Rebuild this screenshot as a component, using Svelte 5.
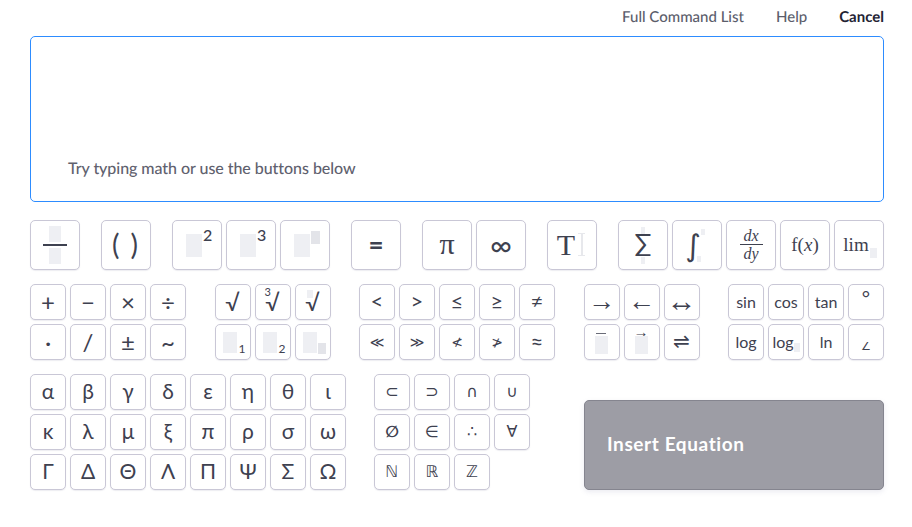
<script>
	const ops = ['+', '−', '×', '÷', '·', '/', '±', '~'];
	const rel = ['<', '>', '≤', '≥', '≠', '≪', '≫', '≮', '≯', '≈'];
	const relFallback = ['≪', '≫', '≮', '≯'];
	const greek = ['α', 'β', 'γ', 'δ', 'ε', 'η', 'θ', 'ι', 'κ', 'λ', 'μ', 'ξ', 'π', 'ρ', 'σ', 'ω', 'Γ', 'Δ', 'Θ', 'Λ', 'Π', 'Ψ', 'Σ', 'Ω'];
	const sets = ['⊂', '⊃', '∩', '∪', '∅', '∈', '∴', '∀', 'ℕ', 'ℝ', 'ℤ'];
</script>

<div class="page">
	<header class="top">
		<a href="#commands">Full Command List</a>
		<a href="#help">Help</a>
		<a href="#cancel" class="cancel">Cancel</a>
	</header>

	<div class="editor">
		<span class="hint">Try typing math or use the buttons below</span>
	</div>

	<div class="row-big">
		<div class="group">
			<button class="big frac"><i class="ph fr-a"></i><b class="bar"></b><i class="ph fr-b"></i></button>
		</div>
		<div class="group"><button class="big paren">(&nbsp;)</button></div>
		<div class="group">
			<button class="big"><i class="ph base"></i><span class="sup">2</span></button>
			<button class="big"><i class="ph base"></i><span class="sup">3</span></button>
			<button class="big"><i class="ph base"></i><i class="ph-dark sup-box"></i></button>
		</div>
		<div class="group"><button class="big equal">=</button></div>
		<div class="group">
			<button class="big serif-sym">π</button>
			<button class="big inf">∞</button>
		</div>
		<div class="group">
			<button class="big text-btn">T<i class="caret"></i></button>
		</div>
		<div class="group">
			<button class="big sum"><i class="ph lim-top"></i>∑<i class="ph lim-bot"></i></button>
			<button class="big int">∫<i class="ph int-top"></i><i class="ph int-bot"></i></button>
			<button class="big deriv"><em>dx</em><b class="dbar"></b><em>dy</em></button>
			<button class="big func">f(<em>x</em>)</button>
			<button class="big func lim">lim<i class="ph lim-sub"></i></button>
		</div>
	</div>

	<div class="row-small">
		<div class="grid c4">
			{#each ops as op}
				<button class="small op">{op}</button>
			{/each}
		</div>
		<div class="grid c3">
			<button class="small root">√</button>
			<button class="small root"><span class="idx">3</span>√</button>
			<button class="small root"><i class="ph idx-box"></i>√</button>
			<button class="small"><i class="ph sub-base"></i><span class="sub">1</span></button>
			<button class="small"><i class="ph sub-base"></i><span class="sub">2</span></button>
			<button class="small"><i class="ph sub-base"></i><i class="ph-dark sub-box"></i></button>
		</div>
		<div class="grid c5">
			{#each rel as r}
				<button class="small rel" class:rel-alt={relFallback.includes(r)}>{r}</button>
			{/each}
		</div>
		<div class="grid c3">
			<button class="small arrow">→</button>
			<button class="small arrow">←</button>
			<button class="small arrow wide">↔</button>
			<button class="small over"><b class="line"></b><i class="ph over-box"></i></button>
			<button class="small over"><span class="vec">→</span><i class="ph over-box"></i></button>
			<button class="small arrow harp">⇌</button>
		</div>
		<div class="grid c4">
			<button class="small word">sin</button>
			<button class="small word">cos</button>
			<button class="small word">tan</button>
			<button class="small deg">°</button>
			<button class="small word">log</button>
			<button class="small word log-base">log<i class="ph log-sub"></i></button>
			<button class="small word">ln</button>
			<button class="small angle">∠</button>
		</div>
	</div>

	<div class="row-bottom">
		<div class="grid c8">
			{#each greek as g}
				<button class="small greek">{g}</button>
			{/each}
		</div>
		<div class="grid c4 sets">
			{#each sets as s}
				<button class="small set" class:heavy={s === '∅'}>{s}</button>
			{/each}
		</div>
		<button class="insert">Insert Equation</button>
	</div>
</div>

<style>
	:global(body) {
		background: #fff;
		font-family: Lato, "Noto Sans", sans-serif;
		color: #494c5a;
		text-rendering: geometricPrecision;
	}

	.page {
		width: 912px;
		height: 527px;
		box-sizing: border-box;
		padding: 0 28px 0 30px;
		overflow: hidden;
	}

	.top {
		display: flex;
		justify-content: flex-end;
		gap: 32px;
		height: 36px;
		padding-top: 7px;
		box-sizing: border-box;
		font-size: 15px;
		line-height: 20px;
		font-weight: 500;
	}

	.top a {
		color: #5b5d6b;
		text-decoration: none;
	}

	.top .cancel {
		color: #232333;
		font-weight: 700;
	}

	.editor {
		height: 166px;
		box-sizing: border-box;
		border: 1px solid #2d8cff;
		border-radius: 5px;
		padding: 120px 37px 0;
	}

	.hint {
		font-size: 16px;
		line-height: 24px;
		font-weight: 500;
		letter-spacing: -0.05px;
		color: #5f616e;
	}

	button {
		position: relative;
		display: flex;
		align-items: center;
		justify-content: center;
		flex: none;
		padding: 0;
		background: #fff;
		border: 1px solid #c9c7d6;
		border-radius: 5px;
		box-shadow: 0 1px 1px rgba(110, 110, 140, 0.12);
		font-family: inherit;
		color: #3e4150;
		white-space: nowrap;
	}

	.big {
		width: 50px;
		height: 50px;
		font-size: 22px;
	}

	.small {
		width: 36px;
		height: 36px;
		font-size: 18px;
	}

	.row-big {
		display: flex;
		justify-content: space-between;
		margin-top: 18px;
	}

	.group {
		display: flex;
		gap: 4px;
	}

	.row-small {
		display: flex;
		justify-content: space-between;
		margin-top: 14px;
	}

	.row-bottom {
		display: flex;
		align-items: flex-end;
		margin-top: 14px;
	}

	.grid {
		display: grid;
		gap: 4px;
		align-content: start;
	}

	.c3 { grid-template-columns: repeat(3, 36px); }
	.c4 { grid-template-columns: repeat(4, 36px); }
	.c5 { grid-template-columns: repeat(5, 36px); }
	.c8 { grid-template-columns: repeat(8, 36px); }

	.sets {
		margin-left: 28px;
		align-self: flex-start;
	}

	/* placeholder blocks */
	.ph,
	.ph-dark {
		position: absolute;
		display: block;
		background: #eeeff3;
	}

	.ph-dark {
		background: #e3e4e9;
	}

	.frac {
		flex-direction: column;
	}

	.bar {
		width: 24px;
		height: 2px;
		background: #3e4150;
	}

	.fr-a { left: 18px; top: 5px; width: 12px; height: 16px; }
	.fr-b { left: 18px; top: 27px; width: 12px; height: 16px; }

	.paren {
		font-size: 28px;
		letter-spacing: 2px;
		padding-bottom: 3px;
	}

	.base { left: 13px; top: 13px; width: 16px; height: 23px; }
	.sup { position: absolute; left: 30px; top: 4px; font-size: 16px; font-weight: 500; line-height: 20px; }
	.sup-box { left: 30px; top: 10px; width: 9px; height: 13px; }

	.equal { font-size: 26px; font-weight: 700; padding-bottom: 2px; }
	.serif-sym { font-family: "Liberation Serif", serif; font-size: 30px; padding-bottom: 2px; }
	.inf { font-size: 30px; padding-bottom: 2px; }

	.text-btn {
		font-family: "Liberation Serif", serif;
		font-size: 30px;
		padding-right: 12px;
	}

	.caret {
		position: absolute;
		left: 30px;
		top: 12px;
		width: 7px;
		height: 23px;
		box-sizing: border-box;
		border: 1px solid #e7e8ec;
		border-width: 1px 0;
		background: linear-gradient(#e7e8ec, #e7e8ec) center / 2px 100% no-repeat;
	}

	.sum { font-size: 25px; padding-bottom: 7px; }
	.lim-top { left: 22px; top: 6px; width: 4px; height: 7px; }
	.lim-bot { left: 22px; top: 36px; width: 4px; height: 7px; }

	.int { font-family: "DejaVu Sans", sans-serif; font-size: 30px; padding-right: 8px; }
	.int-top { left: 28px; top: 8px; width: 4px; height: 6px; }
	.int-bot { left: 24px; top: 35px; width: 4px; height: 6px; }

	.deriv {
		flex-direction: column;
		font-family: "Liberation Serif", serif;
		font-size: 16px;
		line-height: 16px;
	}

	.dbar {
		width: 23px;
		height: 1px;
		margin: 0 0 1px;
		background: #3e4150;
	}

	.func {
		font-family: "Liberation Serif", serif;
		font-size: 19px;
	}

	.lim { padding-right: 6px; }
	.lim-sub { left: 35px; top: 27px; width: 7px; height: 10px; }

	.op { font-size: 24px; padding-bottom: 2px; }

	.root { font-size: 23px; }
	.idx { position: absolute; left: 9px; top: 1px; font-size: 11px; line-height: 12px; }
	.idx-box { left: 11px; top: 5px; width: 6px; height: 8px; }

	.sub-base { left: 7px; top: 7px; width: 14px; height: 21px; }
	.sub { position: absolute; left: 23px; top: 17px; font-size: 12px; line-height: 14px; }
	.sub-box { left: 22px; top: 18px; width: 8px; height: 11px; }

	.rel { font-size: 22px; padding-bottom: 3px; }
	.rel-alt { font-family: "DejaVu Sans", sans-serif; font-size: 14px; padding-bottom: 0; }
	.arrow { font-family: "Liberation Sans", sans-serif; font-size: 27px; padding-bottom: 2px; }
	.wide { font-size: 30px; padding-bottom: 3px; }
	.harp { font-family: "DejaVu Sans", sans-serif; font-size: 20px; }

	.over-box { left: 10px; top: 11px; width: 13px; height: 18px; }
	.line { position: absolute; left: 11px; top: 8px; width: 10px; height: 1px; background: #6a6c78; }
	.vec { position: absolute; left: 9px; top: 0; font-size: 15px; line-height: 14px; font-family: "Liberation Sans", sans-serif; }

	.word { font-size: 16px; padding-bottom: 2px; }
	.log-base { padding-right: 6px; }
	.log-sub { left: 25px; top: 18px; width: 6px; height: 9px; }
	.deg { font-size: 20px; padding-bottom: 10px; }
	.angle { font-family: "DejaVu Sans", sans-serif; font-size: 11px; padding-top: 8px; }

	.greek { font-size: 21px; padding-bottom: 3px; }
	.set { font-family: "DejaVu Sans", sans-serif; font-size: 16px; padding-bottom: 2px; }
	.heavy { font-weight: 700; }

	.insert {
		justify-content: flex-start;
		width: 300px;
		height: 90px;
		margin-left: auto;
		padding: 0 0 4px 22px;
		background: #9d9da5;
		border-color: #85858f;
		box-shadow: 0 2px 5px rgba(120, 120, 160, 0.15);
		color: #fff;
		font-size: 19px;
		font-weight: 700;
		letter-spacing: 0.6px;
	}
</style>
